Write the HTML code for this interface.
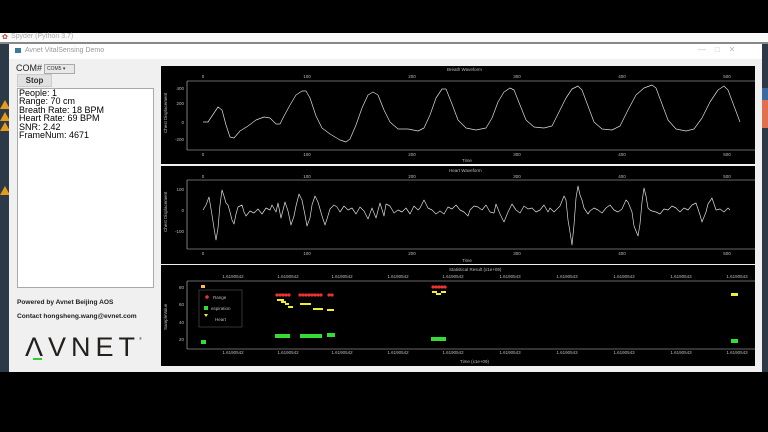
<!DOCTYPE html>
<html><head><meta charset="utf-8"><style>
html,body{margin:0;padding:0;width:768px;height:432px;overflow:hidden;background:#000;font-family:"Liberation Sans",sans-serif}
.abs{position:absolute}
</style></head><body>
<div class="abs" style="left:0;top:33px;width:768px;height:9px;background:#fafafa;border-bottom:2px solid #888"></div>
<div class="abs" style="left:2px;top:33px;font-size:7px;color:#b33">✿</div>
<div class="abs" style="left:11px;top:33px;font-size:7px;color:#aaa">Spyder (Python 3.7)</div>
<div class="abs" style="left:0;top:44px;width:9px;height:328px;background:#2c3a48"></div>
<div class="abs" style="left:0;top:100px;width:0;height:0;border-left:5px solid transparent;border-right:5px solid transparent;border-bottom:9px solid #e89a1a"></div>
<div class="abs" style="left:0;top:112px;width:0;height:0;border-left:5px solid transparent;border-right:5px solid transparent;border-bottom:9px solid #e89a1a"></div>
<div class="abs" style="left:0;top:122px;width:0;height:0;border-left:5px solid transparent;border-right:5px solid transparent;border-bottom:9px solid #e89a1a"></div>
<div class="abs" style="left:0;top:186px;width:0;height:0;border-left:5px solid transparent;border-right:5px solid transparent;border-bottom:9px solid #e89a1a"></div>
<div class="abs" style="left:762px;top:44px;width:6px;height:328px;background:#2c3a48"></div>
<div class="abs" style="left:762px;top:88px;width:6px;height:18px;background:#3a6aa0"></div>
<div class="abs" style="left:762px;top:100px;width:6px;height:28px;background:#e07050"></div>
<div class="abs" style="left:9px;top:44px;width:753px;height:328px;background:#f0f0f0"></div>
<div class="abs" style="left:9px;top:44px;width:753px;height:15px;background:#fff"></div>
<div class="abs" style="left:15px;top:48px;width:6px;height:5px;background:#3a7a9a"></div>
<div class="abs" style="left:25px;top:47px;font-size:7px;color:#999">Avnet VitalSensing Demo</div>
<div class="abs" style="left:698px;top:45px;font-size:8px;color:#bbb">—&nbsp;&nbsp;&nbsp;&nbsp;□&nbsp;&nbsp;&nbsp;&nbsp;✕</div>
<div class="abs" style="left:16px;top:63px;font-size:9px;color:#222">COM#</div>
<div class="abs" style="left:44px;top:64px;width:27px;height:8px;border:1px solid #aaa;background:#e8e8e8;font-size:5px;line-height:8px;color:#333;padding-left:2px">COM5 ▾</div>
<div class="abs" style="left:17px;top:74px;width:33px;height:11px;background:#e1e1e1;border:1px solid #ccc;font-size:8px;font-weight:bold;text-align:center;line-height:11px;color:#333">Stop</div>
<div class="abs" style="left:17px;top:88px;width:135px;height:198px;background:#fff;border:1px solid #aaa"></div>
<div class="abs" style="left:19px;top:89px;font-size:9px;line-height:8.4px;color:#000">People: 1<br>Range: 70 cm<br>Breath Rate: 18 BPM<br>Heart Rate: 69 BPM<br>SNR: 2.42<br>FrameNum: 4671</div>
<div class="abs" style="left:17px;top:299px;font-size:6.6px;font-weight:bold;color:#222">Powered by Avnet Beijing AOS</div>
<div class="abs" style="left:17px;top:313px;font-size:6.6px;font-weight:bold;color:#222">Contact hongsheng.wang@evnet.com</div>
<div class="abs" style="left:25px;top:333px;font-size:27px;letter-spacing:5px;color:#231f1c;line-height:28px">ΛVNET</div>
<div class="abs" style="left:33px;top:358px;width:9px;height:2px;background:#3c3"></div>
<div class="abs" style="left:139px;top:336px;font-size:4px;color:#333">®</div>

<svg class="abs" style="left:0;top:0" width="768" height="432" font-family="Liberation Sans" font-size="4.5" fill="#bbb">
<g>
<rect x="161" y="66" width="594" height="98" fill="#000"/>
<rect x="161" y="166" width="594" height="98" fill="#000"/>
<rect x="161" y="265" width="594" height="101" fill="#000"/>
</g>
<g stroke="#ccc" stroke-width="0.6" fill="none">
<line x1="187" y1="81" x2="755" y2="81"/><line x1="187" y1="150" x2="755" y2="150"/><line x1="187" y1="81" x2="187" y2="150"/>
<line x1="187" y1="180" x2="755" y2="180"/><line x1="187" y1="249" x2="755" y2="249"/><line x1="187" y1="180" x2="187" y2="249"/>
<line x1="187" y1="281" x2="755" y2="281"/><line x1="187" y1="349" x2="755" y2="349"/><line x1="187" y1="281" x2="187" y2="349"/>
</g>
<text x="447" y="71">Breath Waveform</text>
<text x="449" y="172">Heart Waveform</text>
<text x="449" y="271">Statistical Result (x1e+09)</text>
<text x="462" y="162">Time</text><text x="462" y="262">Time</text><text x="460" y="363">Time (x1e+09)</text>
<g text-anchor="middle">
<text x="203" y="78">0</text><text x="307" y="78">100</text><text x="412" y="78">200</text><text x="517" y="78">300</text><text x="622" y="78">400</text><text x="727" y="78">500</text>
<text x="203" y="156">0</text><text x="307" y="156">100</text><text x="412" y="156">200</text><text x="517" y="156">300</text><text x="622" y="156">400</text><text x="727" y="156">500</text>
<text x="203" y="178">0</text><text x="307" y="178">100</text><text x="412" y="178">200</text><text x="517" y="178">300</text><text x="622" y="178">400</text><text x="727" y="178">500</text>
<text x="203" y="255">0</text><text x="307" y="255">100</text><text x="412" y="255">200</text><text x="517" y="255">300</text><text x="622" y="255">400</text><text x="727" y="255">500</text>
<text x="233" y="278">1.6190542</text><text x="288" y="278">1.6190542</text><text x="342" y="278">1.6190542</text><text x="398" y="278">1.6190542</text><text x="453" y="278">1.6190542</text><text x="510" y="278">1.6190543</text><text x="567" y="278">1.6190543</text><text x="624" y="278">1.6190543</text><text x="681" y="278">1.6190543</text><text x="737" y="278">1.6190543</text>
<text x="233" y="354">1.6190542</text><text x="288" y="354">1.6190542</text><text x="342" y="354">1.6190542</text><text x="398" y="354">1.6190542</text><text x="453" y="354">1.6190542</text><text x="510" y="354">1.6190543</text><text x="567" y="354">1.6190543</text><text x="624" y="354">1.6190543</text><text x="681" y="354">1.6190543</text><text x="737" y="354">1.6190543</text>
</g>
<g text-anchor="end">
<text x="184" y="90">400</text><text x="184" y="105">200</text><text x="184" y="124">0</text><text x="184" y="141">-200</text>
<text x="184" y="191">100</text><text x="184" y="212">0</text><text x="184" y="233">-100</text>
<text x="184" y="289">80</text><text x="184" y="306">60</text><text x="184" y="324">40</text><text x="184" y="341">20</text>
</g>
<text transform="translate(167,133) rotate(-90)">Chest Displacement</text>
<text transform="translate(167,232) rotate(-90)">Chest Displacement</text>
<text transform="translate(167,330) rotate(-90)">SampleValue</text>
<polyline fill="none" stroke="#ddd" stroke-width="0.7" stroke-linejoin="round" points="203,122 208,122 212,116 218,107 222,110 226,125 230,137 234,138 240,131 248,126 256,120 264,117 270,118 276,124 280,124 284,116 290,105 296,95 302,91 306,91 310,98 316,116 322,128 330,134 340,140 346,142 350,139 356,125 362,108 368,95 373,92 378,95 384,110 390,122 398,129 408,129 418,131 424,128 430,115 436,98 442,89 446,89 452,104 458,120 466,128 476,130 486,128 492,118 498,102 504,92 510,88 514,90 520,105 526,120 534,127 544,128 552,126 558,114 566,98 572,89 578,86 582,90 588,106 594,122 602,129 612,130 620,126 628,110 636,95 644,88 652,85 656,88 662,104 668,120 676,129 686,131 694,129 702,118 710,102 718,90 724,86 728,90 734,106 740,122"/>
<polyline fill="none" stroke="#ddd" stroke-width="0.7" stroke-linejoin="round" points="203,210 206,205 209,197 212,215 214,228 216,240 218,228 220,205 222,190 224,196 226,203 228,205 230,212 232,220 234,224 236,214 238,207 242,205 244,212 246,216 250,211 254,213 258,209 262,214 266,208 270,210 272,205 276,212 278,203 281,218 285,202 288,211 291,225 294,216 296,206 299,194 302,200 305,215 307,226 310,218 312,205 315,196 318,202 322,216 325,225 327,219 330,209 334,205 337,207 340,212 344,206 348,210 352,208 356,214 360,207 364,211 368,219 372,208 376,218 380,203 384,216 386,204 390,206 394,213 398,210 402,212 406,208 410,214 414,206 418,210 420,208 424,200 428,208 432,210 436,214 440,211 444,214 448,207 452,209 456,205 460,210 464,212 468,216 470,210 474,206 478,207 482,210 486,205 490,212 494,213 496,204 500,214 504,222 508,212 512,204 516,210 520,213 524,206 528,209 532,208 536,212 540,210 544,205 548,212 550,208 554,212 560,206 564,196 566,200 568,220 570,232 572,245 574,225 576,198 578,186 580,195 582,200 584,208 588,214 590,211 594,208 598,210 602,213 606,208 610,205 614,210 618,212 622,209 626,200 628,202 632,212 634,226 638,236 640,224 642,202 644,188 646,196 648,208 650,210 652,211 656,212 660,214 664,209 668,210 672,206 676,208 680,212 684,208 688,210 692,205 696,203 700,215 702,222 706,212 708,204 712,198 714,204 716,210 720,209 724,212 728,208 730,210"/>
<g fill="#e33">
<circle cx="277" cy="295" r="1.6"/><circle cx="280" cy="295" r="1.6"/><circle cx="283" cy="295" r="1.6"/><circle cx="286" cy="295" r="1.6"/><circle cx="289" cy="295" r="1.6"/>
<circle cx="300" cy="295" r="1.6"/><circle cx="303" cy="295" r="1.6"/><circle cx="306" cy="295" r="1.6"/><circle cx="309" cy="295" r="1.6"/><circle cx="312" cy="295" r="1.6"/><circle cx="315" cy="295" r="1.6"/><circle cx="318" cy="295" r="1.6"/><circle cx="321" cy="295" r="1.6"/>
<circle cx="329" cy="295" r="1.6"/><circle cx="332" cy="295" r="1.6"/>
<circle cx="433" cy="287" r="1.6"/><circle cx="436" cy="287" r="1.6"/><circle cx="439" cy="287" r="1.6"/><circle cx="442" cy="287" r="1.6"/><circle cx="445" cy="287" r="1.6"/>
<circle cx="207" cy="297" r="1.8"/>
</g>
<rect x="201" y="285" width="4" height="3" fill="#fb4"/>
<g fill="#ee3">
<rect x="277" y="299" width="7" height="2"/><rect x="281" y="301" width="5" height="2"/><rect x="285" y="303" width="4" height="2"/><rect x="288" y="306" width="5" height="2"/>
<rect x="300" y="303" width="11" height="2"/><rect x="313" y="308" width="10" height="2"/><rect x="327" y="309" width="7" height="2"/>
<rect x="432" y="291" width="5" height="2"/><rect x="436" y="293" width="5" height="2"/><rect x="441" y="291" width="5" height="2"/>
<rect x="731" y="293" width="7" height="3"/>
<polygon points="204,314 208,314 206,317"/>
</g>
<g fill="#3d3">
<rect x="201" y="340" width="5" height="4"/>
<rect x="275" y="334" width="15" height="4"/><rect x="300" y="334" width="22" height="4"/><rect x="327" y="333" width="8" height="4"/>
<rect x="431" y="337" width="15" height="4"/><rect x="731" y="339" width="7" height="4"/>
<rect x="204" y="306" width="4" height="4"/>
</g>
<rect x="199" y="290" width="43" height="37" fill="none" stroke="#555" stroke-width="0.6"/>
<text x="213" y="299">Range</text><text x="211" y="310">espiration</text><text x="215" y="321">Heart</text>
</svg>
</body></html>
